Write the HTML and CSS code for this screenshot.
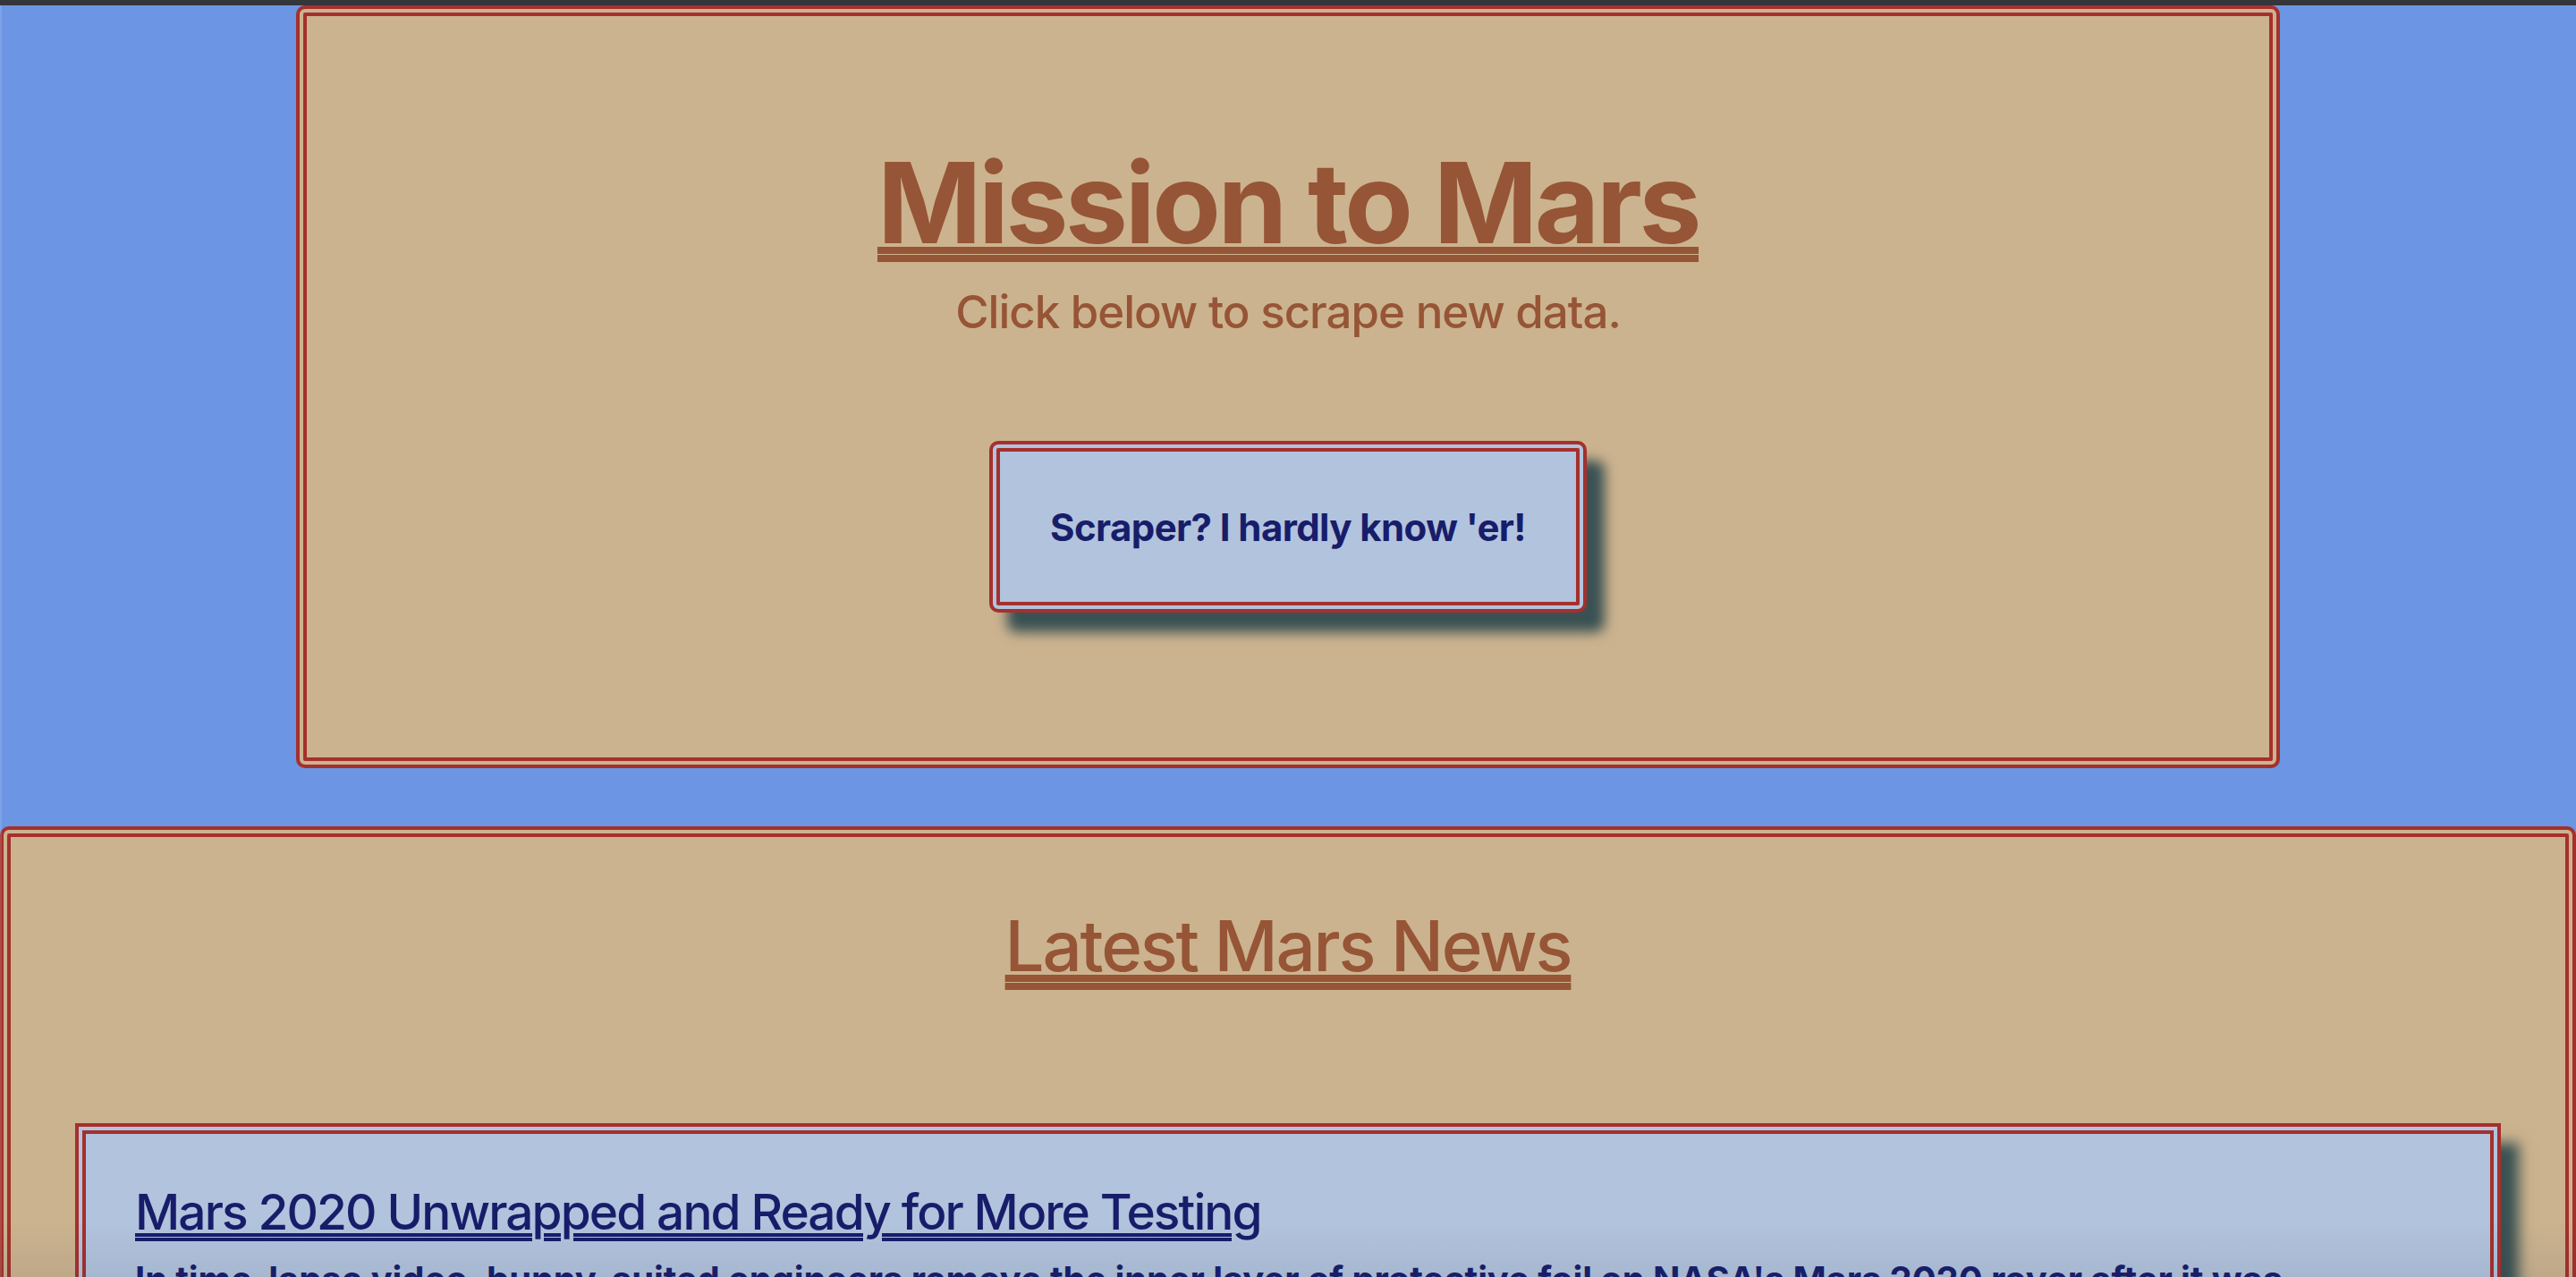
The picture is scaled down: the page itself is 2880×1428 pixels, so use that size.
FILE: index.html
```html
<!DOCTYPE html>
<html lang="en">
<head>
<meta charset="utf-8">
<title>Mission to Mars</title>
<link rel="stylesheet" href="styles.css">
</head>
<body>
<div class="chrome"></div>
<div class="page">
  <header class="jumbotron">
    <h1 class="title">Mission to Mars</h1>
    <p class="lead">Click below to scrape new data.</p>
    <button class="btn" type="button">Scraper? I hardly know 'er!</button>
  </header>
  <section class="news">
    <h2 class="news-title">Latest Mars News</h2>
    <article class="card">
      <h3 class="card-title"><a href="#">Mars 2020 Unwrapped and Ready for More Testing</a></h3>
      <p class="card-text">In time-lapse video, bunny-suited engineers remove the inner layer of protective foil on NASA's Mars 2020 rover after it was relocated for testing.</p>
    </article>
  </section>
</div>
<div class="edge-left"></div>
<div class="vignette"></div>
</body>
</html>
```
FILE: styles.css
```css
* { box-sizing: border-box; }
html, body { margin: 0; padding: 0; }
body {
  background: #6c96e4;
  font-family: Inter, "Noto Sans", "Liberation Sans", sans-serif;
  overflow: hidden;
  height: 1428px;
}
.chrome {
  height: 6px;
  background: #35363a;
}
.page {
  display: flex;
  flex-direction: column;
}
.jumbotron {
  width: 77%;
  margin: 0 auto 65px;
  background: #ccb38f;
  border: 12px double #a5302d;
  border-radius: 10px;
  padding: 146px 0 162px;
  display: flex;
  flex-direction: column;
  align-items: center;
  color: #965536;
}
.title {
  margin: 0;
  font-size: 125px;
  line-height: 1;
  font-weight: 700;
  letter-spacing: -3.4px;
  text-decoration: underline double;
  text-decoration-thickness: 8px;
  text-underline-offset: 4px;
}
.lead {
  margin: 34px 0 0;
  font-size: 51px;
  line-height: 1;
  font-weight: 500;
  letter-spacing: -1px;
}
.btn {
  margin-top: 119px;
  height: 192px;
  padding: 0 56px;
  background: #b2c3dd;
  border: 12px double #a5302d;
  border-radius: 10px;
  box-shadow: 20px 22px 14px #3a5153;
  color: #181d6a;
  font-family: inherit;
  font-size: 42px;
  font-weight: 700;
  letter-spacing: -0.6px;
  cursor: pointer;
}
.news {
  background: #ccb38f;
  border: 12px double #a5302d;
  border-radius: 10px;
  padding: 83px 72px 80px;
  display: flex;
  flex-direction: column;
  align-items: stretch;
}
.news-title {
  margin: 0;
  align-self: center;
  color: #965536;
  font-size: 78px;
  line-height: 1;
  font-weight: 500;
  letter-spacing: -2.2px;
  text-decoration: underline double;
  text-decoration-thickness: 8px;
  text-underline-offset: 4px;
}
.card {
  margin-top: 159px;
  background: #b2c3dd;
  border: 12px double #a5302d;
  box-shadow: 20px 22px 14px #3a5153;
  padding: 60px 55px 60px;
  color: #181d6a;
}
.card-title {
  margin: 0;
  font-size: 55px;
  line-height: 1;
  font-weight: 500;
  letter-spacing: -1.9px;
}
.card-title a {
  color: #181d6a;
  text-decoration: underline double;
  text-decoration-thickness: 4px;
  text-underline-offset: 4px;
}
.card-text {
  margin: 18px 0 0;
  font-size: 40px;
  line-height: 1.5;
  font-weight: 700;
  letter-spacing: -0.1px;
}
.edge-left {
  position: fixed;
  left: 0;
  top: 6px;
  bottom: 0;
  width: 2px;
  background: rgba(255, 255, 255, 0.12);
}
.vignette {
  position: fixed;
  left: 0;
  right: 0;
  bottom: 0;
  height: 60px;
  background: linear-gradient(to bottom, rgba(40, 50, 70, 0), rgba(40, 50, 70, 0.08));
  pointer-events: none;
}
```
